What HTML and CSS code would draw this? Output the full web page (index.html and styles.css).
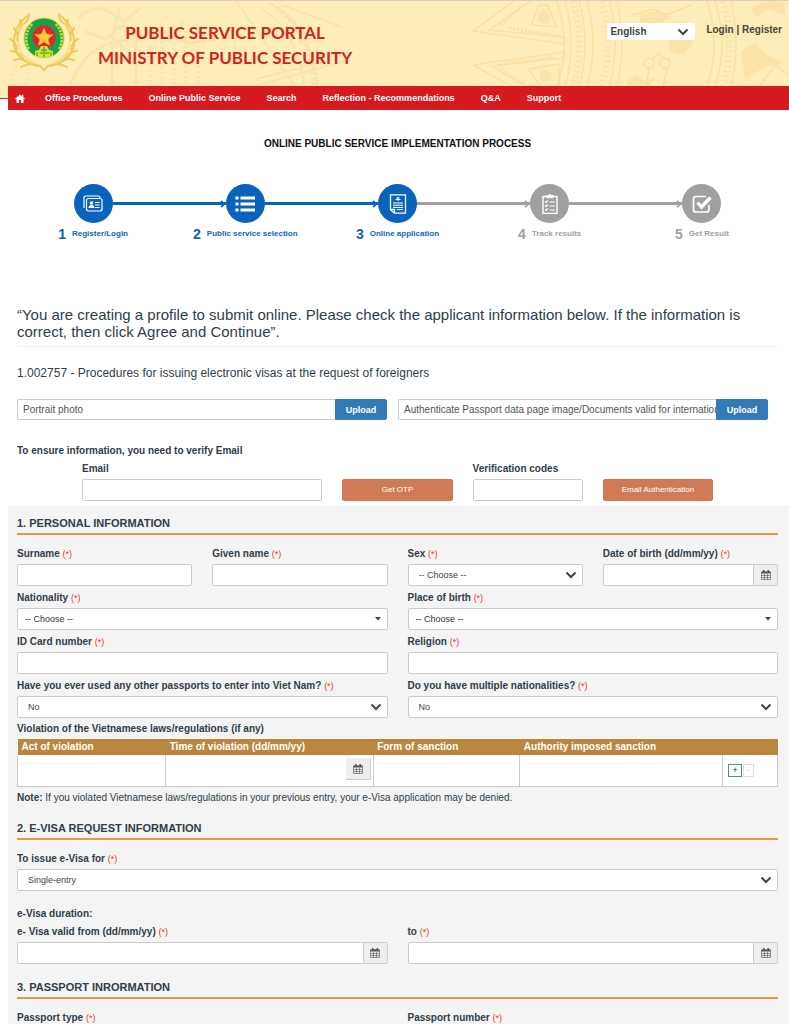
FILE: index.html
```html
<!DOCTYPE html>
<html lang="en">
<head>
<meta charset="utf-8">
<title>Public Service Portal</title>
<link rel="stylesheet" href="styles.css">
</head>
<body>
<svg width="0" height="0" class="defs" aria-hidden="true">
  <symbol id="chevron" viewBox="0 0 12 8"><path d="M1.500 1.500 6 6l4.500-4.500" fill="none" stroke="currentColor" stroke-width="2"/></symbol>
  <symbol id="caret" viewBox="0 0 6 4"><path d="M0 0h6L3 3.500z" fill="currentColor"/></symbol>
  <symbol id="calendar" viewBox="0 0 10 10"><path d="M.5 2h9v7.500h-9zM.5 5.500h9M.5 7.500h9M3.500 4v5.500M6.500 4v5.500" fill="none" stroke="currentColor" stroke-width=".6"/><path d="M.5 1.500h9v2h-9zM2 0h1.500v2H2zM6.500 0H8v2H6.500z" fill="currentColor"/></symbol>
  <symbol id="arrow" viewBox="0 0 6 8"><path d="M1 .8 4.500 4 1 7.200" fill="none" stroke="currentColor" stroke-width="1.800"/></symbol>
</svg>

<header class="banner">
  <svg class="art art-left" viewBox="0 0 350 86" fill="none" stroke="#f5d69b" aria-hidden="true">
    <g opacity=".4" stroke-width="3">
      <path d="M78 18q14-16 30-8l16 10 18-14M84 30l22 8 16-14 20 10M120 6l-8 30 24 22M70 84q14-34 40-42l52-12 28 12 40-6M112 42v42M136 36v48"/>
    </g>
    <g opacity=".35" stroke-width="5" stroke-dasharray="2 3">
      <path d="M150 44v42M162 36v50M174 32v54M186 30v56M198 30v56M16 64l-8 22M30 62l-4 24"/>
    </g>
    <g opacity=".5"><path d="M270 2q40 22 48 82M262 8q36 24 42 76M236 0l58 84M250 86l96-26M256 78l80-20M282 4l60 22" stroke-width="1.500"/><path d="M278 8q34 24 36 76" stroke-width="5" stroke-dasharray="2 3"/></g>
  </svg>
  <svg class="art art-right" viewBox="0 0 320 86" fill="none" stroke="#f6d795" aria-hidden="true">
    <g opacity=".6" stroke-width="1.300">
      <path d="M45 0 4 30l92 13V36L20 29 62 0M4 64l92-13v6L22 65l36 21M4 64l40 22"/>
      <path d="M62 24l8-20h8l10 22zM60 68l30-5v23H72z"/>
      <path d="M88 0q14 43 0 86M96 0q12 43 0 86M110 0q12 43 0 86M118 0q12 43 0 86M140 0q12 43 0 86M148 0q10 43 0 86M238 0q14 43 0 86M246 0q14 43 0 86M262 0q10 43 0 86"/>
      <path d="M32 24 54 4M40 27l50 8M30 64l56-8M32 68l24 16" stroke-width="3" stroke-dasharray="2 2"/>
    </g>
    <g opacity=".4" stroke-width="7" stroke-dasharray="2 3"><path d="M104 0q12 43 0 86M133 0q12 43 0 86M254 0q12 43 0 86"/></g>
    <g opacity=".5" fill="#f9d998" stroke="none">
      <path d="M74 8q10 6 6 12-6 5-11-1-1-6 5-11zM75 68q9 5 7 10-5 5-11 0-2-6 4-10zM158 80l8-6 20 12h-28zM200 34l16-2 8 10-10 12-14-4zM170 14l18-4 14 6-10 6-20 0zM272 50l14-8 12 12 18 8-20 4-20 12zM282 8q14-12 34-6v12l-16-6-12 8z"/>
    </g>
    <g opacity=".6" stroke-width="1.600"><circle cx="180" cy="62" r="5"/><circle cx="196" cy="62" r="5"/><path d="M180 67l-2 16 8-6M198 67l-4 19M184 58l6-6 6 6M164 14l20-6 14 6 24-10M290 86l16-22 14 10"/></g>
  </svg>
  <div class="brand">
    <svg class="emblem" viewBox="0 0 70 60" aria-label="Emblem">
      <g fill="none" stroke="#efc95c" stroke-width="2" stroke-linecap="round">
        <path d="M18 4Q4 16 5 33q2 16 26 21l4 4M52 4q14 12 13 29-2 16-26 21l-4 4"/>
        <path d="M20 2q0 7-6 10M11 8q3 6-2 13M5 16q5 6 3 12M1 27q6 3 7 11M2 39q7 0 12 7M5 48q9-3 15 4M12 55q9-5 16-1M50 2q0 7 6 10M59 8q-3 6 2 13M65 16q-5 6-3 12M69 27q-6 3-7 11M68 39q-7 0-12 7M65 48q-9-3-15 4M58 55q-9-5-16-1"/>
      </g>
      <g fill="none" stroke="#f6da70" stroke-width="1.200"><path d="M15 11Q7 22 10 36q4 11 18 16M55 11q8 11 5 25-4 11-18 16"/></g>
      <circle cx="35" cy="26" r="20" fill="#18a04a" stroke="#e3cf35"/>
      <path d="M23 12q-10 11-3 26M47 12q10 11 3 26" fill="none" stroke="#b6dc3f" stroke-width="3" stroke-dasharray="2.500 1"/>
      <circle cx="35" cy="25" r="11.500" fill="#e3242b"/>
      <path d="m35 16 2.600 6.100 6.600.6-5 4.300 1.500 6.500L35 30l-5.700 3.500 1.500-6.500-5-4.300 6.600-.6z" fill="#ffca3a" stroke="#f6a02d" stroke-width=".5"/>
      <path d="M26 44v-5l4-1 2-4h6l2 4 4 1v5q-9 4-18 0z" fill="#dbe02f"/><path d="M32 38h6M31 41h3m2 0h4M35 35v10M28 40v4M42 40v4" stroke="#269a43" stroke-width="1"/>
    </svg>
    <h1 class="title">PUBLIC SERVICE PORTAL<br>MINISTRY OF PUBLIC SECURITY</h1>
  </div>
  <div class="account">
    <div class="select language">
      <select aria-label="Language"><option>English</option></select>
      <svg class="chevron"><use href="#chevron"/></svg>
    </div>
    <div class="links"><a href="#">Login</a> | <a href="#">Register</a></div>
  </div>
</header>

<div class="nav-row">
  <nav class="nav">
    <a href="#" aria-label="Home"><svg class="home" viewBox="0 0 10 9"><path d="M5 .5 0 4.700l.6.600H1.500V9H4V6h2v3h2.500V5.300h.9l.6-.6-1.700-1.500V.8H7v1.300z" fill="#fff"/></svg></a>
    <a href="#">Office Procedures</a>
    <a href="#">Online Public Service</a>
    <a href="#">Search</a>
    <a href="#">Reflection - Recommendations</a>
    <a href="#">Q&amp;A</a>
    <a href="#">Support</a>
  </nav>
</div>

<main class="page">
  <section class="intro">
    <h2 class="process-title">ONLINE PUBLIC SERVICE IMPLEMENTATION PROCESS</h2>
    <ol class="steps">
      <li class="step">
        <div class="track"><i class="line blank"></i><span class="dot"><svg viewBox="0 0 20 20" fill="none" stroke="#fff"><path d="M1 14V4q0-2 2-2h12q2 0 2 2" stroke-width="1.200"/><rect x="3.500" y="4.500" width="15.500" height="12.500" rx="2" stroke-width="1.200"/><circle cx="8.500" cy="9" r="1.800" fill="#fff" stroke="none"/><path d="M5.500 14q0-3 3-3t3 3z" fill="#fff" stroke="none"/><path d="M12 8.500h4.500M12 11h4.500M12 13.500h4.500" stroke-width="1.200"/></svg></span><i class="line"></i></div>
        <div class="caption"><b>1</b>Register/Login</div>
      </li>
      <li class="step">
        <div class="track"><i class="line"></i><svg class="arrow"><use href="#arrow"/></svg><span class="dot"><svg viewBox="0 0 20 20" fill="#fff"><circle cx="2" cy="4" r="1.800"/><circle cx="2" cy="10" r="1.800"/><circle cx="2" cy="16" r="1.800"/><path d="M5.500 2.500H20v3H5.500zM5.500 8.500H20v3H5.500zM5.500 14.500H20v3H5.500z"/></svg></span><i class="line"></i></div>
        <div class="caption"><b>2</b>Public service selection</div>
      </li>
      <li class="step">
        <div class="track"><i class="line"></i><svg class="arrow"><use href="#arrow"/></svg><span class="dot"><svg viewBox="0 0 20 20" fill="none" stroke="#fff"><path d="M2.500.8h15v18.400H6.300l-3.800-3.500zM2.500 15.500h4v3.500" stroke-width="1.300"/><path d="M10 3v4M7.500 5.500h5M8.500 4h3M5 9h10M5 11.200h10M5 13.400h10M9 15.600h6"/></svg></span><i class="line grey"></i></div>
        <div class="caption"><b>3</b>Online application</div>
      </li>
      <li class="step pending">
        <div class="track"><i class="line"></i><svg class="arrow"><use href="#arrow"/></svg><span class="dot"><svg viewBox="0 0 20 20" fill="none" stroke="#fff"><path d="M3 2.500h14v17H3z" stroke-width="1.400"/><path d="M6.500 1h2q1.500-2 3 0h2v3.200h-7z" fill="#fff" stroke="none"/><path d="m5 7.500 1 1 2-2M5 11.500l1 1 2-2M5 15.500l1 1 2-2M9.500 8H15M9.500 12H15M9.500 16H15" stroke-width="1.200"/></svg></span><i class="line"></i></div>
        <div class="caption"><b>4</b>Track results</div>
      </li>
      <li class="step pending">
        <div class="track"><i class="line"></i><svg class="arrow"><use href="#arrow"/></svg><span class="dot"><svg viewBox="0 0 20 20" fill="none" stroke="#fff"><path d="M14 2.500H4Q1.500 2.500 1.500 5v10.500Q1.500 18 4 18h10.500q2.500 0 2.500-2.500V11" stroke-width="1.700"/><path d="m5.500 8.500 4 4.500L18.500 3.500" stroke-width="3.300"/></svg></span><i class="line blank"></i></div>
        <div class="caption"><b>5</b>Get Result</div>
      </li>
    </ol>

    <p class="lead">“You are creating a profile to submit online. Please check the applicant information below. If the information is correct, then click Agree and Continue”.</p>
    <p class="procedure">1.002757 - Procedures for issuing electronic visas at the request of foreigners</p>

    <div class="uploads">
      <div class="upload"><input type="text" aria-label="Portrait photo" placeholder="Portrait photo"><button type="button">Upload</button></div>
      <div class="upload"><input type="text" aria-label="Passport image" placeholder="Authenticate Passport data page image/Documents valid for international travel"><button type="button">Upload</button></div>
    </div>

    <p class="verify-note">To ensure information, you need to verify Email</p>
    <div class="verify">
      <div class="field"><label for="email">Email</label><input id="email" type="email"></div>
      <button type="button" class="action">Get OTP</button>
      <div class="field"><label for="code">Verification codes</label><input id="code" type="text"></div>
      <button type="button" class="action">Email Authentication</button>
    </div>
  </section>

  <form class="form">
    <h3 class="heading">1. PERSONAL INFORMATION</h3>
    <div class="grid">
      <div class="field"><label for="surname">Surname <em>(*)</em></label><input id="surname" type="text"></div>
      <div class="field"><label for="given">Given name <em>(*)</em></label><input id="given" type="text"></div>
      <div class="field"><label for="sex">Sex <em>(*)</em></label>
        <div class="select"><select id="sex"><option>-- Choose --</option></select><svg class="chevron"><use href="#chevron"/></svg></div></div>
      <div class="field"><label for="dob">Date of birth (dd/mm/yy) <em>(*)</em></label>
        <div class="date"><input id="dob" type="text"><button type="button" aria-label="Pick date"><svg><use href="#calendar"/></svg></button></div></div>
      <div class="field wide"><label for="nationality">Nationality <em>(*)</em></label>
        <div class="select combo"><select id="nationality"><option>-- Choose --</option></select><svg class="caret"><use href="#caret"/></svg></div></div>
      <div class="field wide"><label for="birthplace">Place of birth <em>(*)</em></label>
        <div class="select combo"><select id="birthplace"><option>-- Choose --</option></select><svg class="caret"><use href="#caret"/></svg></div></div>
      <div class="field wide"><label for="idcard">ID Card number <em>(*)</em></label><input id="idcard" type="text"></div>
      <div class="field wide"><label for="religion">Religion <em>(*)</em></label><input id="religion" type="text"></div>
      <div class="field wide"><label for="other">Have you ever used any other passports to enter into Viet Nam? <em>(*)</em></label>
        <div class="select"><select id="other"><option>No</option></select><svg class="chevron"><use href="#chevron"/></svg></div></div>
      <div class="field wide"><label for="multiple">Do you have multiple nationalities? <em>(*)</em></label>
        <div class="select"><select id="multiple"><option>No</option></select><svg class="chevron"><use href="#chevron"/></svg></div></div>
    </div>

    <table class="violations">
      <caption>Violation of the Vietnamese laws/regulations (if any)</caption>
      <colgroup><col class="c-act"><col class="c-time"><col class="c-form"><col class="c-auth"><col class="c-tools"></colgroup>
      <thead><tr><th>Act of violation</th><th>Time of violation (dd/mm/yy)</th><th>Form of sanction</th><th>Authority imposed sanction</th><th></th></tr></thead>
      <tbody><tr>
        <td><input type="text" aria-label="Act of violation"></td>
        <td><div class="date"><input type="text" aria-label="Time of violation"><button type="button" aria-label="Pick date"><svg><use href="#calendar"/></svg></button></div></td>
        <td><input type="text" aria-label="Form of sanction"></td>
        <td><input type="text" aria-label="Authority imposed sanction"></td>
        <td><div class="tools"><button type="button">+</button><button type="button" disabled>-</button></div></td>
      </tr></tbody>
    </table>
    <p class="note"><b>Note:</b> If you violated Vietnamese laws/regulations in your previous entry, your e-Visa application may be denied.</p>

    <h3 class="heading">2. E-VISA REQUEST INFORMATION</h3>
    <div class="grid">
      <div class="field full"><label for="entry">To issue e-Visa for <em>(*)</em></label>
        <div class="select"><select id="entry"><option>Single-entry</option></select><svg class="chevron"><use href="#chevron"/></svg></div></div>
    </div>
    <p class="duration">e-Visa duration:</p>
    <div class="grid">
      <div class="field wide"><label for="from">e- Visa valid from (dd/mm/yy) <em>(*)</em></label>
        <div class="date"><input id="from" type="text"><button type="button" aria-label="Pick date"><svg><use href="#calendar"/></svg></button></div></div>
      <div class="field wide"><label for="to">to <em>(*)</em></label>
        <div class="date"><input id="to" type="text"><button type="button" aria-label="Pick date"><svg><use href="#calendar"/></svg></button></div></div>
    </div>

    <h3 class="heading">3. PASSPORT INRORMATION</h3>
    <div class="grid">
      <div class="name wide">Passport type <em>(*)</em></div>
      <div class="name wide">Passport number <em>(*)</em></div>
    </div>
  </form>
</main>
</body>
</html>
```

FILE: styles.css
```css
* { box-sizing: border-box; }
body { margin: 0; background: #fff; color: #2f3d4a; font: 10px/14px "Liberation Sans", Arial, sans-serif; }
h1, h2, h3, p, ol { margin: 0; padding: 0; }
a { color: inherit; text-decoration: none; }
em { color: #f0322f; font-size: 9px; font-style: normal; font-weight: normal; }
button, input, select { font: inherit; color: inherit; margin: 0; min-width: 0; }
svg { display: block; }
.defs { position: absolute; }

/* banner */
.banner { position: relative; display: flex; justify-content: space-between; min-height: 86px; padding: 11px 7px 0 9px; border-top: 1px solid #d8cfc6; background: #fdedb9; overflow: hidden; }
.art { position: absolute; top: 0; height: 86px; }
.art-left { left: 0; width: 350px; }
.art-right { right: 0; width: 320px; }
.brand { position: relative; display: flex; gap: 19px; }
.emblem { width: 70px; height: 60px; }
.title { padding-top: 8px; color: #d0241f; font: bold 17px/25px Lato, sans-serif; text-align: center; }
.account { position: relative; display: flex; align-items: flex-start; gap: 11px; padding-top: 11px; color: #4a4438; font-weight: bold; }
.language { width: 88px; }

/* navigation */
.nav-row { padding-left: 8px; background: linear-gradient(#fdedb9 12px, #b0402c 12px, #b0402c 13px, #fff 13px); }
.nav { display: flex; align-items: center; gap: 26px; height: 24px; padding-left: 7px; background: #d71920; color: #fff; font-size: 9px; font-weight: bold; }
.nav a:first-child { margin-right: -6px; }
.home { width: 10px; height: 9px; }

/* process steps */
.page { padding-left: 8px; }
.intro { padding: 0 11px 5px 9px; }
.process-title { padding-top: 27px; color: #111; font-size: 10px; line-height: 14px; text-align: center; }
.steps { display: grid; grid-template-columns: repeat(5, 1fr); margin-top: 33px; list-style: none; }
.step { color: #0a63bb; }
.step.pending { color: #a0a0a2; }
.track { display: flex; align-items: center; }
.line { flex: 1; height: 3px; background: currentColor; }
.line.blank { background: none; }
.line.grey { background: #a0a0a2; }
.arrow { width: 6px; height: 8px; margin-left: -6px; }
.dot { display: grid; place-items: center; width: 39px; height: 39px; border-radius: 50%; background: currentColor; }
.dot svg { width: 20px; height: 20px; }
.caption { display: flex; justify-content: center; align-items: center; gap: 6px; margin-top: 4px; font-size: 8px; font-weight: bold; line-height: 14px; white-space: nowrap; }
.caption b { font-size: 14px; }

/* intro text */
.lead { margin-top: 65px; padding-bottom: 6px; border-bottom: 1px solid #eee; font-size: 15px; line-height: 17px; }
.procedure { margin-top: 18px; font-size: 12px; line-height: 16px; }
.uploads { display: grid; grid-template-columns: 1fr 1fr; gap: 11px; margin-top: 18px; padding-right: 10px; }
.upload { display: flex; height: 21px; }
.upload input { flex: 1; padding: 0 0 0 5px; border: 1px solid #ccc; border-right: 0; border-radius: 2px 0 0 2px; }
.upload input::placeholder { color: #555; opacity: 1; }
.upload button { flex: none; width: 52px; padding: 0; border: 1px solid #337ab7; border-radius: 0 2px 2px 0; background: #337ab7; color: #fff; font-size: 9px; font-weight: bold; }
.verify-note { margin-top: 24px; font-weight: bold; }
.verify { display: grid; grid-template-columns: 24fr 11fr 11fr 11fr; align-items: end; gap: 20px; margin-top: 4px; padding: 0 65px; }
.action { height: 22px; padding: 0; border: 1px solid #cf7552; border-radius: 2px; background: #d07a58; color: #fff; font-size: 8px; }

/* fields */
.form { padding: 10px 11px 0 9px; background: #f4f4f4; }
.heading { padding-bottom: 3px; border-bottom: 2px solid #e39a45; font-size: 11px; line-height: 14px; }
.grid { display: grid; grid-template-columns: repeat(4, 1fr); gap: 5px 20px; }
.heading + .grid { margin-top: 12px; }
.wide { grid-column: span 2; }
.full { grid-column: 1 / -1; }
.field { display: flex; flex-direction: column; gap: 3px; min-width: 0; }
.field label, .name { font-weight: bold; line-height: 14px; white-space: nowrap; }
.field input, .select select { width: 100%; height: 22px; padding: 0 4px; border: 1px solid #ccc; border-radius: 2px; background: #fff; }
.select { display: grid; align-items: center; }
.select > * { grid-area: 1 / 1; }
.select svg { justify-self: end; pointer-events: none; color: #444; }
.select select { appearance: none; padding: 0 10px; color: #444; font-size: 9px; }
.combo select { padding: 0 7px; color: #333; }
.chevron { width: 12px; height: 8px; margin-right: 6px; }
.caret { width: 6px; height: 4px; margin-right: 7px; }
.select.language select { height: 17px; padding: 0 3px; border: 0; font-size: 10px; font-weight: bold; }
.date { display: flex; }
.date input { flex: 1; border-radius: 2px 0 0 2px; }
.date button { flex: none; display: grid; place-items: center; width: 25px; height: 22px; margin-left: -1px; padding: 0; border: 1px solid #ccc; border-radius: 0 2px 2px 0; background: #eee; color: #555; }
.date svg { width: 10px; height: 10px; }

/* violations table */
.violations { width: 100%; margin-top: 4px; border-collapse: collapse; table-layout: fixed; background: #fff; }
.violations caption { padding-bottom: 3px; background: #f4f4f4; font-weight: bold; line-height: 14px; text-align: left; }
.c-act { width: 19.5%; }
.c-time { width: 27.3%; }
.c-form { width: 19.3%; }
.c-auth { width: 26.7%; }
.c-tools { width: 7.2%; }
.violations th { height: 16px; padding: 0 4px; background: #bb863e; color: #fff; text-align: left; line-height: 14px; white-space: nowrap; }
.violations td { height: 31px; padding: 3px 2px; border: 1px solid #ccc; border-top: 0; vertical-align: top; }
.violations input { display: block; width: 100%; height: 22px; border: 0; background: linear-gradient(#edf6f8, #edf6f8) 0 5px / 100% 1px no-repeat; }
.violations .date input { background: none; }
.violations .date button { border-top: 0; border-left: 0; }
.tools { display: flex; align-items: center; gap: 1px; padding: 6px 0 0 3px; }
.tools button { width: 14px; height: 13px; padding: 0; border: 1px solid #4f8ba5; background: #fff; font-size: 9px; line-height: 9px; }
.tools button:disabled { width: 11px; height: 13px; border-color: #ddd; color: #ccc; }
.note { margin-top: 4px; font-size: 10px; line-height: 14px; }
.note + .heading { margin-top: 16px; }
.duration { margin: 16px 0 4px; font-weight: bold; line-height: 14px; }
.grid + .heading { margin-top: 16px; }
```
